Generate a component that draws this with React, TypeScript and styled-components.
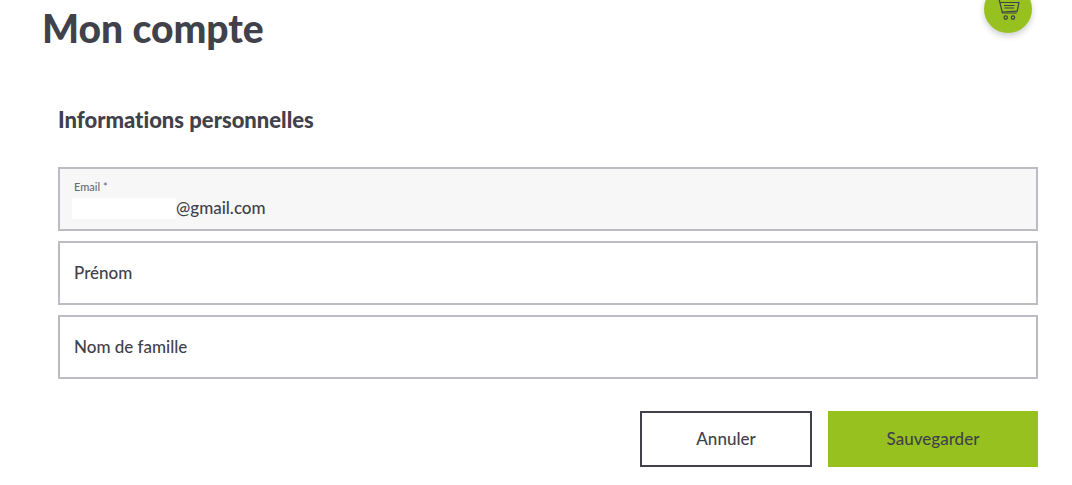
import React from "react";
import styled, { createGlobalStyle } from "styled-components";

const GlobalStyle = createGlobalStyle`
  * { box-sizing: border-box; }
  body {
    margin: 0;
    background: #fff;
    color: #41414b;
    font-family: Lato, "Open Sans", sans-serif;
    font-size: 17px;
    line-height: 24px;
  }
  button, input { font: inherit; color: inherit; }
`;

const Page = styled.main`
  position: relative;
  padding: 0 18px 16px 42px;
`;

const Title = styled.h1`
  margin: 0;
  padding-top: 4px;
  font-size: 39px;
  line-height: 48px;
  font-weight: 900;
`;

const CartButton = styled.button`
  position: absolute;
  top: -15px;
  right: 40px;
  width: 48px;
  height: 48px;
  padding: 0;
  border: 0;
  border-radius: 50%;
  display: grid;
  place-items: center;
  background: #97c11f;
  box-shadow: 0 3px 6px rgba(0, 0, 0, 0.2);
  cursor: pointer;
`;

const Form = styled.form`
  padding: 56px 16px 0;
`;

const Heading = styled.h2`
  margin: 0 0 35px;
  font-size: 22px;
  line-height: 24px;
  font-weight: 900;
  font-variant-ligatures: none;
`;

const Fields = styled.div`
  display: grid;
  gap: 10px;
`;

const Field = styled.div<{ $filled?: boolean }>`
  display: grid;
  align-content: center;
  height: 64px;
  padding: 0 12px;
  border: 2px solid #bcbcc2;
  background: ${(p) => (p.$filled ? "#f7f7f7" : "#fff")};
`;

const SmallLabel = styled.label`
  padding-left: 2px;
  font-size: 11px;
  line-height: 16px;
  font-weight: 500;
  color: #6c6c75;
`;

const FieldLabel = styled.label`
  grid-area: 1 / 1;
  padding-left: 2px;
  font-weight: 500;
  pointer-events: none;
`;

const Input = styled.input`
  grid-area: 1 / 1;
  width: 100%;
  min-width: 0;
  padding: 0 2px;
  border: 0;
  outline: 0;
  background: transparent;
`;

const ValueRow = styled.div`
  display: flex;
  align-items: center;
  padding-top: 2px;
`;

const Mask = styled.span`
  flex: none;
  width: 104px;
  height: 21px;
  background: #fff;
`;

const ValueInput = styled.input`
  flex: 1;
  min-width: 0;
  height: 22px;
  padding: 0;
  border: 0;
  outline: 0;
  background: transparent;
  font-weight: 500;
`;

const Actions = styled.div`
  display: flex;
  justify-content: flex-end;
  gap: 16px;
  margin-top: 32px;
`;

const Button = styled.button<{ $primary?: boolean }>`
  width: ${(p) => (p.$primary ? 210 : 172)}px;
  height: 56px;
  padding: 0;
  border: 2px solid ${(p) => (p.$primary ? "#97c11f" : "#41414b")};
  background: ${(p) => (p.$primary ? "#97c11f" : "#fff")};
  font-weight: 500;
  cursor: pointer;
`;

const CartIcon = () => (
  <svg width="24" height="24" viewBox="0 0 24 24" fill="none" stroke="#41414b" strokeWidth="1.2" aria-hidden="true">
    <path d="M0.5 1.5h2.4l3.5 14.5h14.4" />
    <path d="M3.9 5.5h19l-1.7 8.6L6 15" />
    <path d="M8 8.5h10.5M8.5 11h9.5" />
    <circle cx="9.7" cy="20.6" r="1.7" />
    <circle cx="17" cy="20.6" r="1.7" />
  </svg>
);

export default function App() {
  return (
    <Page>
      <GlobalStyle />
      <Title>Mon compte</Title>
      <CartButton type="button" aria-label="Panier">
        <CartIcon />
      </CartButton>
      <Form onSubmit={(e) => e.preventDefault()}>
        <Heading>Informations personnelles</Heading>
        <Fields>
          <Field $filled>
            <SmallLabel htmlFor="email">Email *</SmallLabel>
            <ValueRow>
              <Mask />
              <ValueInput id="email" type="text" defaultValue="@gmail.com" readOnly />
            </ValueRow>
          </Field>
          <Field>
            <FieldLabel htmlFor="firstname">Prénom</FieldLabel>
            <Input id="firstname" type="text" />
          </Field>
          <Field>
            <FieldLabel htmlFor="lastname">Nom de famille</FieldLabel>
            <Input id="lastname" type="text" />
          </Field>
        </Fields>
        <Actions>
          <Button type="button">Annuler</Button>
          <Button type="submit" $primary>Sauvegarder</Button>
        </Actions>
      </Form>
    </Page>
  );
}
